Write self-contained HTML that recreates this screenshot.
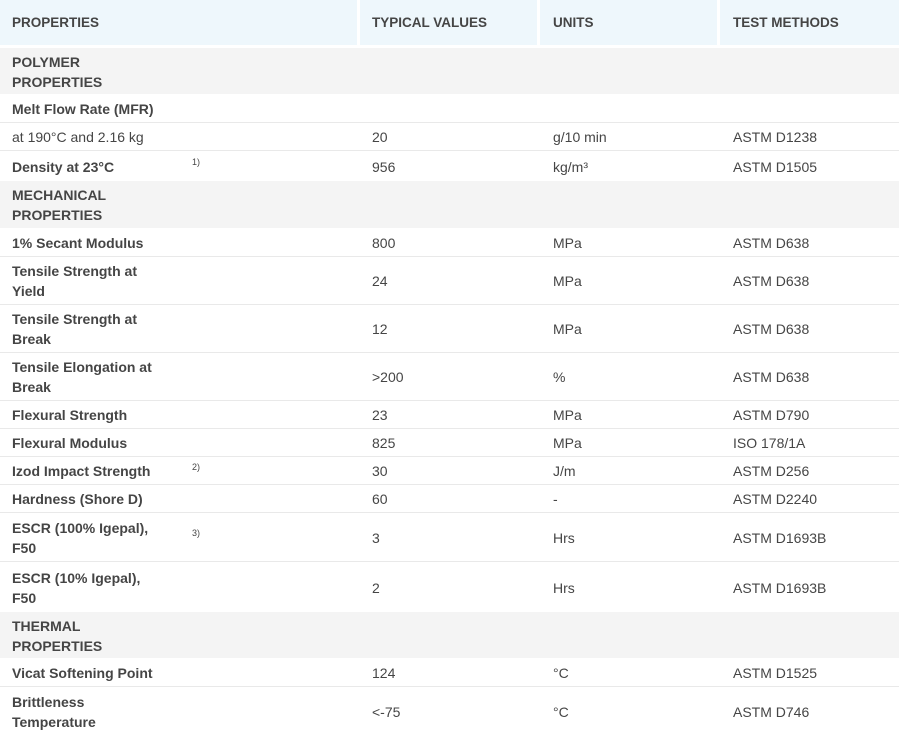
<!DOCTYPE html>
<html><head><meta charset="utf-8"><style>
body{margin:0;background:#fff;width:907px;height:742px;overflow:hidden;font-family:"Liberation Sans",sans-serif;color:#454545;font-size:14px}
.r{position:absolute;left:0;width:899px;border-bottom:1px solid #e9e9e9;box-sizing:border-box}
.c{position:absolute;top:1px;bottom:0;display:flex;align-items:center;line-height:20px}
.c1{left:12px;font-weight:bold;width:170px}
.c1.n{font-weight:normal}
.c2{left:372px}.c3{left:553px}.c4{left:733px}
.sup{position:absolute;left:192px;font-size:9px;line-height:10px}
.g{background:#f4f4f4;border-bottom:none}
.h{position:absolute;top:0;height:45px;background:#eef7fc;font-weight:bold;font-size:13.5px;display:flex;align-items:center;box-sizing:border-box;padding-left:12px}
</style></head><body>
<div class="h" style="left:0;width:357px">PROPERTIES</div>
<div class="h" style="left:360px;width:177px">TYPICAL VALUES</div>
<div class="h" style="left:540px;width:177px;padding-left:13px">UNITS</div>
<div class="h" style="left:720px;width:179px;padding-left:13px">TEST METHODS</div>

<div class="r g" style="top:48px;height:46px"><div class="c c1">POLYMER<br>PROPERTIES</div></div>
<div class="r" style="top:94px;height:29px"><div class="c c1">Melt Flow Rate (MFR)</div></div>
<div class="r" style="top:123px;height:28px"><div class="c c1 n">at 190°C and 2.16 kg</div><div class="c c2">20</div><div class="c c3">g/10 min</div><div class="c c4">ASTM D1238</div></div>
<div class="r" style="top:151px;height:30px;border:none"><div class="c c1">Density at 23°C</div><span class="sup" style="top:6px">1)</span><div class="c c2">956</div><div class="c c3">kg/m³</div><div class="c c4">ASTM D1505</div></div>
<div class="r g" style="top:181px;height:47px"><div class="c c1">MECHANICAL<br>PROPERTIES</div></div>
<div class="r" style="top:228px;height:29px"><div class="c c1">1% Secant Modulus</div><div class="c c2">800</div><div class="c c3">MPa</div><div class="c c4">ASTM D638</div></div>
<div class="r" style="top:257px;height:48px"><div class="c c1">Tensile Strength at<br>Yield</div><div class="c c2">24</div><div class="c c3">MPa</div><div class="c c4">ASTM D638</div></div>
<div class="r" style="top:305px;height:48px"><div class="c c1">Tensile Strength at<br>Break</div><div class="c c2">12</div><div class="c c3">MPa</div><div class="c c4">ASTM D638</div></div>
<div class="r" style="top:353px;height:48px"><div class="c c1">Tensile Elongation at<br>Break</div><div class="c c2">&gt;200</div><div class="c c3">%</div><div class="c c4">ASTM D638</div></div>
<div class="r" style="top:401px;height:28px"><div class="c c1">Flexural Strength</div><div class="c c2">23</div><div class="c c3">MPa</div><div class="c c4">ASTM D790</div></div>
<div class="r" style="top:429px;height:28px"><div class="c c1">Flexural Modulus</div><div class="c c2">825</div><div class="c c3">MPa</div><div class="c c4">ISO 178/1A</div></div>
<div class="r" style="top:457px;height:28px"><div class="c c1">Izod Impact Strength</div><span class="sup" style="top:5px">2)</span><div class="c c2">30</div><div class="c c3">J/m</div><div class="c c4">ASTM D256</div></div>
<div class="r" style="top:485px;height:28px"><div class="c c1">Hardness (Shore D)</div><div class="c c2">60</div><div class="c c3">-</div><div class="c c4">ASTM D2240</div></div>
<div class="r" style="top:513px;height:49px"><div class="c c1">ESCR (100% Igepal),<br>F50</div><span class="sup" style="top:15px">3)</span><div class="c c2">3</div><div class="c c3">Hrs</div><div class="c c4">ASTM D1693B</div></div>
<div class="r" style="top:562px;height:50px;border:none"><div class="c c1">ESCR (10% Igepal),<br>F50</div><div class="c c2">2</div><div class="c c3">Hrs</div><div class="c c4">ASTM D1693B</div></div>
<div class="r g" style="top:612px;height:46px"><div class="c c1">THERMAL<br>PROPERTIES</div></div>
<div class="r" style="top:658px;height:29px"><div class="c c1">Vicat Softening Point</div><div class="c c2">124</div><div class="c c3">°C</div><div class="c c4">ASTM D1525</div></div>
<div class="r" style="top:687px;height:48px;border:none"><div class="c c1">Brittleness<br>Temperature</div><div class="c c2">&lt;-75</div><div class="c c3">°C</div><div class="c c4">ASTM D746</div></div>
</body></html>
